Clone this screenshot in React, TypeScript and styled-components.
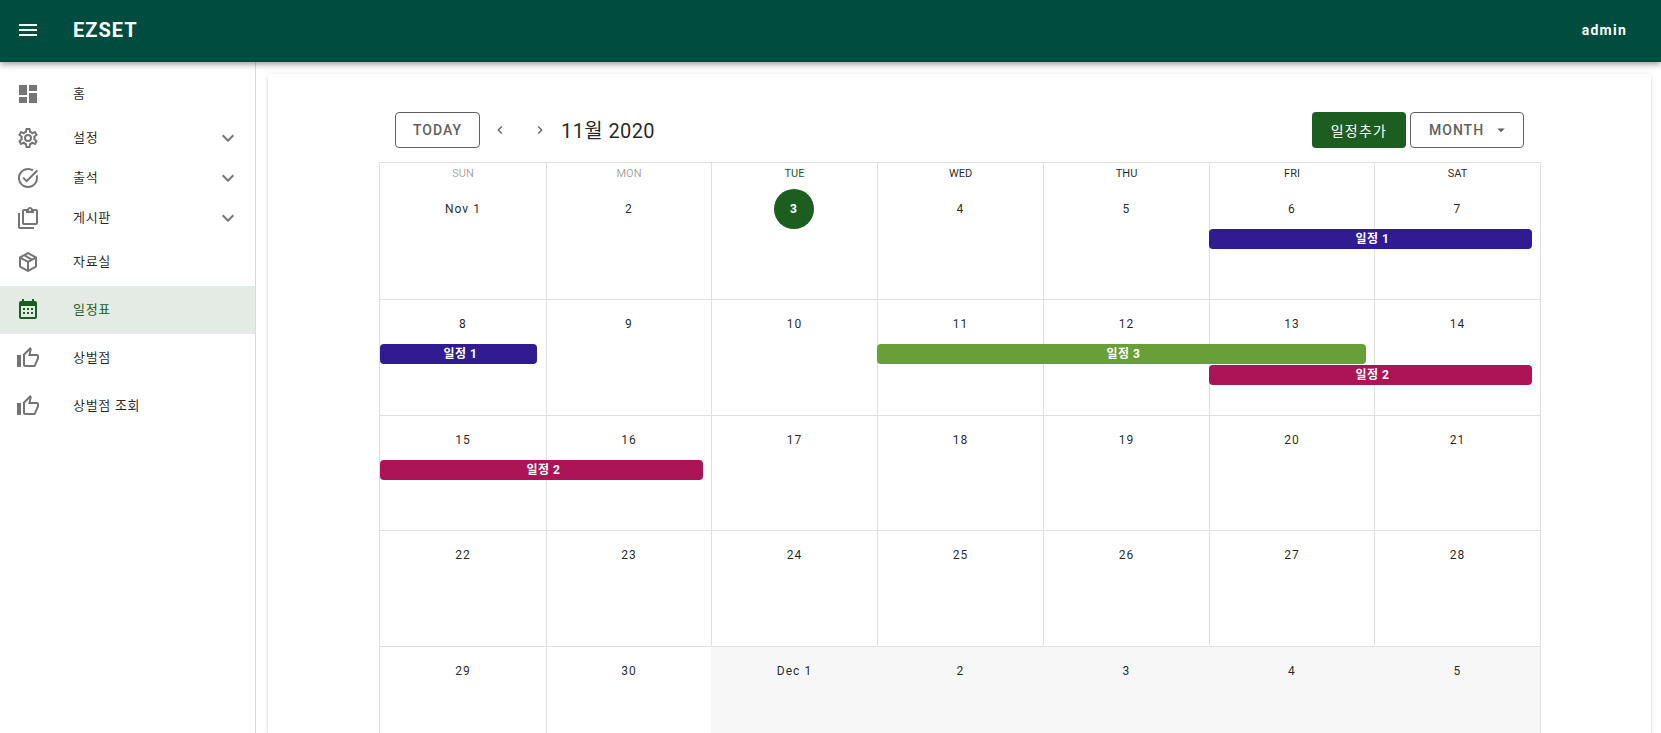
import React from "react";
import styled, { createGlobalStyle } from "styled-components";
import { MdChevronLeft, MdChevronRight, MdArrowDropDown, MdExpandMore, MdDashboard, MdMenu, MdOutlineTaskAlt } from "react-icons/md";

const GREEN = "#1b5e20";
const LINE = "#e0e0e0";
const OUTSIDE = "#f7f7f7";

const GlobalStyle = createGlobalStyle`
    html, body {
        margin: 0;
        height: 100%;
        overflow: hidden;
        background: #ffffff;
    }
    * {
        box-sizing: border-box;
    }
    body {
        font-family: Roboto, "Noto Sans CJK KR", sans-serif;
        color: rgba(0, 0, 0, 0.87);
    }
`;

const Page = styled.div`
    height: 733px;
    display: flex;
    flex-direction: column;
    overflow: hidden;
`;

const TopBar = styled.header`
    height: 62px;
    flex: none;
    display: flex;
    align-items: center;
    padding: 0 34px 2px 16px;
    background: #004d40;
    color: #fff;
    box-shadow: 0 2px 4px -1px rgba(0, 0, 0, 0.2), 0 4px 5px 0 rgba(0, 0, 0, 0.14), 0 1px 10px 0 rgba(0, 0, 0, 0.12);
    position: relative;
    z-index: 2;
`;

const Brand = styled.div`
    margin-left: 33px;
    font-size: 20px;
    font-weight: 700;
    letter-spacing: 1px;
`;

const UserName = styled.div`
    margin-left: auto;
    font-size: 14px;
    font-weight: 700;
    letter-spacing: 1.25px;
`;

const Body = styled.div`
    flex: 1;
    min-height: 0;
    display: flex;
`;

const Sidebar = styled.nav`
    width: 256px;
    flex: none;
    padding-top: 8px;
    border-right: 1px solid #d9d9d9;
`;

const NavRow = styled.div<{ $group?: boolean; $active?: boolean }>`
    height: ${(p) => (p.$group ? 40 : 48)}px;
    display: flex;
    align-items: center;
    padding: 0 15px 0 16px;
    font-size: 13px;
    background: ${(p) => (p.$active ? "#e3ebe4" : "transparent")};
    color: ${(p) => (p.$active ? GREEN : "rgba(0, 0, 0, 0.87)")};
    & > svg:first-child {
        color: ${(p) => (p.$active ? GREEN : "#757575")};
        flex: none;
    }
`;

const NavLabel = styled.span`
    margin-left: 33px;
    padding-bottom: 4px;
    flex: 1;
    letter-spacing: 0.7px;
`;

const Content = styled.main`
    flex: 1;
    min-width: 0;
    padding: 12px 10px 0 12px;
`;

const Card = styled.section`
    height: 100%;
    padding: 38px 110px 0 111px;
    background: #fff;
    border-radius: 4px 4px 0 0;
    box-shadow: 0 3px 1px -2px rgba(0, 0, 0, 0.2), 0 2px 2px 0 rgba(0, 0, 0, 0.14), 0 1px 5px 0 rgba(0, 0, 0, 0.12);
`;

const Toolbar = styled.div`
    height: 36px;
    margin-bottom: 14px;
    padding: 0 17px 0 16px;
    display: flex;
    align-items: center;
`;

const OutlineButton = styled.button`
    width: 85px;
    height: 36px;
    padding: 0;
    display: inline-flex;
    align-items: center;
    justify-content: center;
    background: #fff;
    border: 1px solid #616161;
    border-radius: 4px;
    color: #616161;
    font: 500 14px Roboto, "Noto Sans CJK KR", sans-serif;
    letter-spacing: 1px;
`;

const MonthButton = styled(OutlineButton)`
    width: 114px;
    margin-left: 4px;
    padding-left: 18px;
    justify-content: flex-start;
    & > svg {
        margin-left: 8px;
    }
`;

const AddButton = styled.button`
    width: 94px;
    height: 36px;
    margin-left: auto;
    padding: 0;
    background: ${GREEN};
    border: 0;
    border-radius: 4px;
    color: #fff;
    font: 400 14px Roboto, "Noto Sans CJK KR", sans-serif;
    letter-spacing: 1.25px;
`;

const ArrowButton = styled.button`
    width: 36px;
    height: 36px;
    margin: 0 2px;
    padding: 0;
    display: inline-flex;
    align-items: center;
    justify-content: center;
    background: none;
    border: 0;
    color: #616161;
`;

const Title = styled.div`
    margin-left: 1px;
    padding-bottom: 2px;
    font-size: 20px;
    letter-spacing: 0.4px;
`;

const Calendar = styled.div`
    border-top: 1px solid ${LINE};
    border-right: 1px solid ${LINE};
`;

const Grid = styled.div<{ $height: number }>`
    display: grid;
    grid-template-columns: 167px 165px 166px 166px 166px 165px 166px;
    height: ${(p) => p.$height}px;
`;

const Weekday = styled.div<{ $tone: "past" | "today" | "future" }>`
    border-left: 1px solid ${LINE};
    text-align: center;
    font-size: 11px;
    line-height: 21px;
    color: ${(p) => (p.$tone === "past" ? "rgba(0, 0, 0, 0.38)" : p.$tone === "today" ? GREEN : "rgba(0, 0, 0, 0.87)")};
`;

const Week = styled(Grid)`
    &:not(:nth-child(2)) > div {
        border-top: 1px solid ${LINE};
    }
`;

const Cell = styled.div<{ $outside?: boolean }>`
    border-left: 1px solid ${(p) => (p.$outside ? OUTSIDE : LINE)};
    padding-top: 4px;
    background: ${(p) => (p.$outside ? OUTSIDE : "transparent")};
    min-width: 0;
`;

const DayLabel = styled.div`
    height: 40px;
    display: flex;
    align-items: center;
    justify-content: center;
    font-size: 12px;
    letter-spacing: 1.07px;
`;

const TodayBadge = styled.span`
    width: 40px;
    height: 40px;
    margin-left: -1px;
    display: flex;
    align-items: center;
    justify-content: center;
    border-radius: 50%;
    background: ${GREEN};
    color: #fff;
    font-weight: 700;
`;

const Event = styled.div<{ $color: string; $width: number; $row: number; $first: boolean }>`
    position: relative;
    z-index: 1;
    width: ${(p) => p.$width}px;
    height: 20px;
    margin-top: ${(p) => p.$row * 21}px;
    margin-left: ${(p) => (p.$first ? 0 : -1)}px;
    padding-left: 4px;
    background: ${(p) => p.$color};
    border-radius: 4px;
    color: #fff;
    text-align: center;
    font-size: 12px;
    font-weight: 700;
    line-height: 20px;
    letter-spacing: 0.5px;
`;

// mdi 아이콘
const ICONS = {
    cog: "M12,8A4,4 0 0,1 16,12A4,4 0 0,1 12,16A4,4 0 0,1 8,12A4,4 0 0,1 12,8M12,10A2,2 0 0,0 10,12A2,2 0 0,0 12,14A2,2 0 0,0 14,12A2,2 0 0,0 12,10M10,22C9.75,22 9.54,21.82 9.5,21.58L9.13,18.93C8.5,18.68 7.96,18.34 7.44,17.94L4.95,18.95C4.73,19.03 4.46,18.95 4.34,18.73L2.34,15.27C2.21,15.05 2.27,14.78 2.46,14.63L4.57,12.97L4.5,12L4.57,11L2.46,9.37C2.27,9.22 2.21,8.95 2.34,8.73L4.34,5.27C4.46,5.05 4.73,4.96 4.95,5.05L7.44,6.05C7.96,5.66 8.5,5.32 9.13,5.07L9.5,2.42C9.54,2.18 9.75,2 10,2H14C14.25,2 14.46,2.18 14.5,2.42L14.87,5.07C15.5,5.32 16.04,5.66 16.56,6.05L19.05,5.05C19.27,4.96 19.54,5.05 19.66,5.27L21.66,8.73C21.79,8.95 21.73,9.22 21.54,9.37L19.43,11L19.5,12L19.43,13L21.54,14.63C21.73,14.78 21.79,15.05 21.66,15.27L19.66,18.73C19.54,18.95 19.27,19.04 19.05,18.95L16.56,17.95C16.04,18.34 15.5,18.68 14.87,18.93L14.5,21.58C14.46,21.82 14.25,22 14,22H10M11.25,4L10.88,6.61C9.68,6.86 8.62,7.5 7.85,8.39L5.44,7.35L4.69,8.65L6.8,10.2C6.4,11.37 6.4,12.64 6.8,13.8L4.68,15.36L5.43,16.66L7.86,15.62C8.63,16.5 9.68,17.14 10.87,17.38L11.24,20H12.76L13.13,17.39C14.32,17.14 15.37,16.5 16.14,15.62L18.57,16.66L19.32,15.36L17.2,13.81C17.6,12.64 17.6,11.37 17.2,10.2L19.31,8.65L18.56,7.35L16.15,8.39C15.38,7.5 14.32,6.86 13.12,6.62L12.75,4H11.25Z",
    clipboard: "M4 7V21H18V23H4C2.9 23 2 22.1 2 21V7H4M20 3C21.1 3 22 3.9 22 5V17C22 18.1 21.1 19 20 19H8C6.9 19 6 18.1 6 17V5C6 3.9 6.9 3 8 3H11.18C11.6 1.84 12.7 1 14 1C15.3 1 16.4 1.84 16.82 3H20M14 3C13.45 3 13 3.45 13 4C13 4.55 13.45 5 14 5C14.55 5 15 4.55 15 4C15 3.45 14.55 3 14 3M10 7V5H8V17H20V5H18V7H10Z",
    box: "M21,16.5C21,16.88 20.79,17.21 20.47,17.38L12.57,21.82C12.41,21.94 12.21,22 12,22C11.79,22 11.59,21.94 11.43,21.82L3.53,17.38C3.21,17.21 3,16.88 3,16.5V7.5C3,7.12 3.21,6.79 3.53,6.62L11.43,2.18C11.59,2.06 11.79,2 12,2C12.21,2 12.41,2.06 12.57,2.18L20.47,6.62C20.79,6.79 21,7.12 21,7.5V16.5M12,4.15L10.11,5.22L16,8.61L17.96,7.5L12,4.15M6.04,7.5L12,10.85L13.96,9.75L8.08,6.35L6.04,7.5M5,15.91L11,19.29V12.58L5,9.21V15.91M19,15.91V9.21L13,12.58V19.29L19,15.91Z",
    calendar: "M9,10V12H7V10H9M13,10V12H11V10H13M17,10V12H15V10H17M19,3A2,2 0 0,1 21,5V19A2,2 0 0,1 19,21H5C3.89,21 3,20.1 3,19V5A2,2 0 0,1 5,3H6V1H8V3H16V1H18V3H19M19,19V8H5V19H19M9,14V16H7V14H9M13,14V16H11V14H13M17,14V16H15V14H17Z",
    thumb: "M5,9V21H1V9H5M9,21A2,2 0 0,1 7,19V9C7,8.45 7.22,7.95 7.59,7.59L14.17,1L15.23,2.06C15.5,2.33 15.67,2.7 15.67,3.11L15.64,3.43L14.69,8H21C22.11,8 23,8.9 23,10V12C23,12.26 22.95,12.5 22.86,12.73L19.84,19.78C19.54,20.5 18.83,21 18,21H9M9,19H18.03L21,12V10H12.21L13.34,4.68L9,9.03V19Z",
};

function MdiIcon({ path }: { path: string }) {
    return (
        <svg width="24" height="24" viewBox="0 0 24 24" fill="currentColor">
            <path d={path} />
        </svg>
    );
}

const NAV_ITEMS = [
    { label: "홈", icon: <MdDashboard size={24} /> },
    { label: "설정", icon: <MdiIcon path={ICONS.cog} />, group: true },
    { label: "출석", icon: <MdOutlineTaskAlt size={24} />, group: true },
    { label: "게시판", icon: <MdiIcon path={ICONS.clipboard} />, group: true },
    { label: "자료실", icon: <MdiIcon path={ICONS.box} /> },
    { label: "일정표", icon: <MdiIcon path={ICONS.calendar} />, active: true },
    { label: "상벌점", icon: <MdiIcon path={ICONS.thumb} /> },
    { label: "상벌점 조회", icon: <MdiIcon path={ICONS.thumb} /> },
];

const WEEKDAYS: { name: string; tone: "past" | "today" | "future" }[] = [
    { name: "SUN", tone: "past" },
    { name: "MON", tone: "past" },
    { name: "TUE", tone: "today" },
    { name: "WED", tone: "future" },
    { name: "THU", tone: "future" },
    { name: "FRI", tone: "future" },
    { name: "SAT", tone: "future" },
];

const WEEKS = [
    { height: 114, days: ["Nov 1", "2", "3", "4", "5", "6", "7"] },
    { height: 116, days: ["8", "9", "10", "11", "12", "13", "14"] },
    { height: 115, days: ["15", "16", "17", "18", "19", "20", "21"] },
    { height: 116, days: ["22", "23", "24", "25", "26", "27", "28"] },
    { height: 116, days: ["29", "30", "Dec 1", "2", "3", "4", "5"] },
];

const EVENTS = [
    { week: 0, day: 5, width: 323, row: 0, name: "일정 1", color: "#311b92" },
    { week: 1, day: 0, width: 157, row: 0, name: "일정 1", color: "#311b92" },
    { week: 1, day: 3, width: 489, row: 0, name: "일정 3", color: "#689f38" },
    { week: 1, day: 5, width: 323, row: 1, name: "일정 2", color: "#ad1457" },
    { week: 2, day: 0, width: 323, row: 0, name: "일정 2", color: "#ad1457" },
];

function App() {
    return (
        <Page>
            <GlobalStyle />
            <TopBar>
                <MdMenu size={24} />
                <Brand>EZSET</Brand>
                <UserName>admin</UserName>
            </TopBar>
            <Body>
                <Sidebar>
                    {NAV_ITEMS.map((item) => (
                        <NavRow key={item.label} $group={item.group} $active={item.active}>
                            {item.icon}
                            <NavLabel>{item.label}</NavLabel>
                            {item.group && <MdExpandMore size={24} color="#757575" />}
                        </NavRow>
                    ))}
                </Sidebar>
                <Content>
                    <Card>
                        <Toolbar>
                            <OutlineButton>TODAY</OutlineButton>
                            <ArrowButton>
                                <MdChevronLeft size={16} />
                            </ArrowButton>
                            <ArrowButton>
                                <MdChevronRight size={16} />
                            </ArrowButton>
                            <Title>11월 2020</Title>
                            <AddButton>일정추가</AddButton>
                            <MonthButton>
                                MONTH
                                <MdArrowDropDown size={18} />
                            </MonthButton>
                        </Toolbar>
                        <Calendar>
                            <Grid $height={22}>
                                {WEEKDAYS.map((d) => (
                                    <Weekday key={d.name} $tone={d.tone}>
                                        {d.name}
                                    </Weekday>
                                ))}
                            </Grid>
                            {WEEKS.map(({ height, days }, week) => (
                                <Week key={week} $height={height}>
                                    {days.map((label, day) => {
                                        const isToday = week === 0 && day === 2;
                                        const outside = week === 4 && day >= 2;
                                        return (
                                            <Cell key={day} $outside={outside}>
                                                <DayLabel>{isToday ? <TodayBadge>{label}</TodayBadge> : label}</DayLabel>
                                                {EVENTS.filter((e) => e.week === week && e.day === day).map((e) => (
                                                    <Event key={e.name} $color={e.color} $width={e.width} $row={e.row} $first={day === 0}>
                                                        {e.name}
                                                    </Event>
                                                ))}
                                            </Cell>
                                        );
                                    })}
                                </Week>
                            ))}
                        </Calendar>
                    </Card>
                </Content>
            </Body>
        </Page>
    );
}

export default App;
